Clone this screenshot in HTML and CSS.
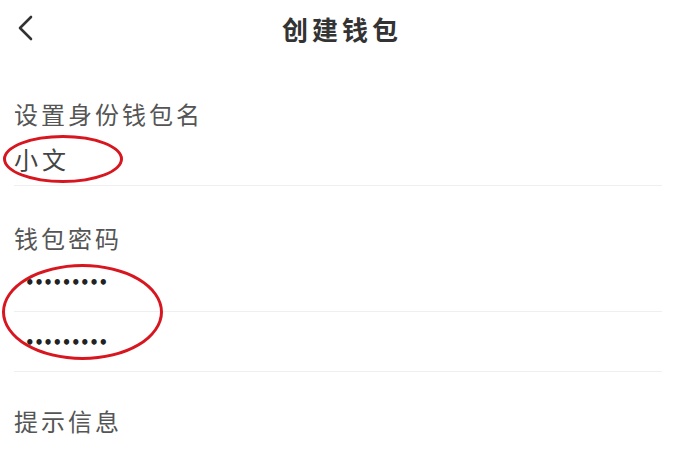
FILE: index.html
```html
<!DOCTYPE html>
<html lang="zh-CN">
<head>
<meta charset="UTF-8" />
<meta name="viewport" content="width=device-width, initial-scale=1" />
<title>创建钱包</title>
<link rel="stylesheet" href="styles.css">
</head>
<body>
<div class="page">
  <header class="topbar">
    <button class="back" aria-label="返回">
      <svg width="18" height="28" viewBox="0 0 18 28"><path d="M15 3 L4 14 L15 25" fill="none" stroke="#333" stroke-width="2.6" stroke-linecap="round" stroke-linejoin="round"/></svg>
    </button>
    <h1 class="title">创建钱包</h1>
  </header>

  <section class="group group-name">
    <div class="label">设置身份钱包名</div>
    <div class="field field-name"><span class="value">小文</span></div>
  </section>

  <section class="group group-pwd">
    <div class="label">钱包密码</div>
    <div class="field"><span class="dots">•••••••••</span></div>
    <div class="field"><span class="dots">•••••••••</span></div>
  </section>

  <section class="group group-hint">
    <div class="label">提示信息</div>
  </section>

  <div class="mark mark-name"></div>
  <div class="mark mark-pwd"></div>
</div>
</body>
</html>
```

FILE: styles.css
```css
body {
  margin: 0;
  background: #fff;
  font-family: "Noto Sans CJK SC", "Noto Sans", sans-serif;
}
.page {
  position: relative;
  width: 680px;
  height: 453px;
  overflow: hidden;
}
.topbar {
  position: relative;
  height: 56px;
  display: flex;
  align-items: center;
  justify-content: center;
}
.back {
  position: absolute;
  left: 16px;
  top: 14px;
  padding: 0;
  border: none;
  background: none;
}
.title {
  margin: 0;
  font-size: 26px;
  font-weight: 700;
  color: #333;
  letter-spacing: 4px;
  padding-left: 4px;
}
.group {
  padding: 0 18px 0 14px;
}
.group-name {
  margin-top: 44px;
}
.group-pwd {
  margin-top: 38px;
}
.group-hint {
  margin-top: 35px;
}
.label {
  height: 28px;
  line-height: 28px;
  font-size: 24px;
  color: #555;
  letter-spacing: 3px;
}
.field {
  height: 59px;
  display: flex;
  align-items: center;
  border-bottom: 1px solid #efefef;
}
.field-name {
  height: 58px;
  padding-top: 4px;
  box-sizing: border-box;
}
.value {
  font-size: 24px;
  color: #444;
  letter-spacing: 4px;
}
.dots {
  padding: 2px 0 0 11px;
  font-family: "DejaVu Sans", sans-serif;
  font-size: 15px;
  font-weight: 700;
  color: #222;
  letter-spacing: -0.4px;
}
.mark {
  position: absolute;
  border: 3px solid #d8161f;
  border-radius: 50%;
  box-sizing: border-box;
}
.mark-name {
  left: 3px;
  top: 135px;
  width: 120px;
  height: 48px;
}
.mark-pwd {
  left: 2px;
  top: 264px;
  width: 161px;
  height: 96px;
}
```
